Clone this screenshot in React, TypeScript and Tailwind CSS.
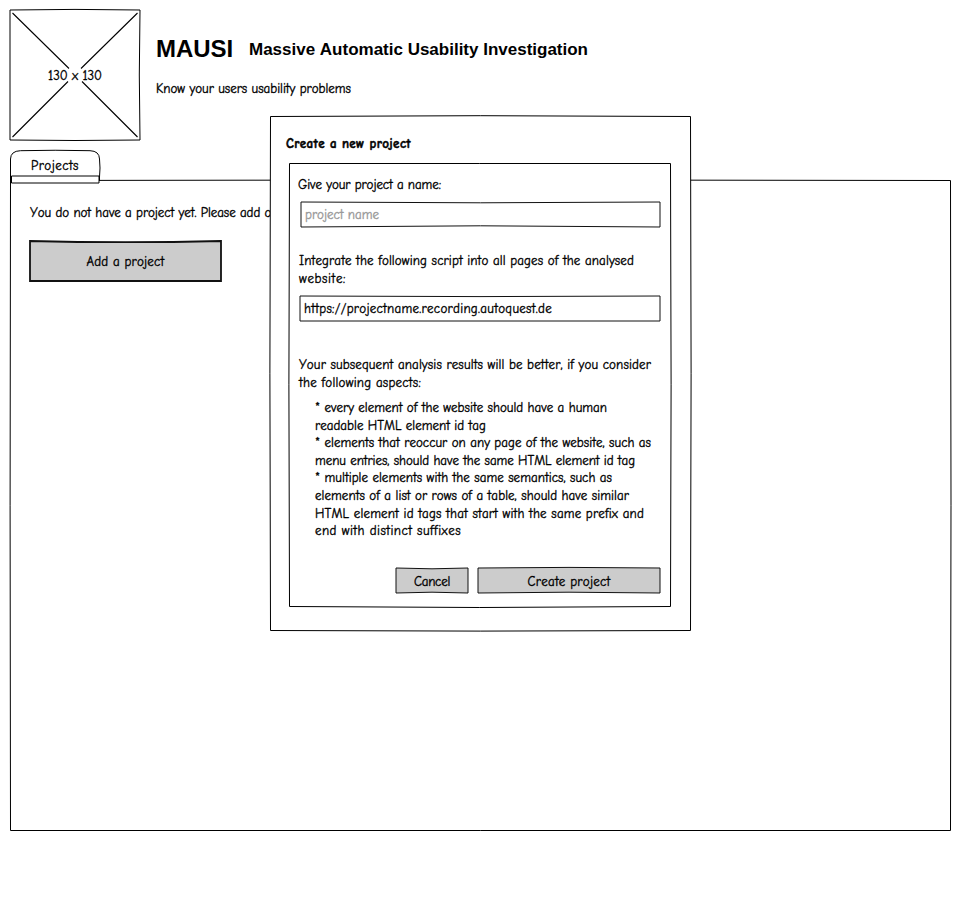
import { useLayoutEffect, useRef, useState } from "react";
import type { ReactNode } from "react";

type Bows = [number, number, number, number];

/* Hand-drawn rectangle: every side is a shallow curve, bowed outwards by the given amount. */
function Frame({
  w,
  h,
  bows = [0, 0, 0, 0],
  offset = 0,
  fill = "#fff",
  stroke = "#000",
  strokeWidth = 1,
}: {
  w: number;
  h: number;
  bows?: Bows;
  offset?: number;
  fill?: string;
  stroke?: string;
  strokeWidth?: number;
}) {
  const a = offset;
  const r = w + offset;
  const b = h + offset;
  const [t, e, s, l] = bows.map((v) => v * 2);
  const d = `M${a} ${a}Q${w / 2} ${a - t} ${r} ${a}Q${r + e} ${h / 2} ${r} ${b}Q${w / 2} ${b + s} ${a} ${b}Q${a - l} ${h / 2} ${a} ${a}Z`;
  return (
    <svg className="pointer-events-none absolute inset-0 overflow-visible" width={w} height={h} aria-hidden="true">
      <path d={d} fill={fill} stroke={stroke} strokeWidth={strokeWidth} />
    </svg>
  );
}

/* One line of text, tracked so that it spans the given width. */
function Line({ width, className = "", children }: { width: number; className?: string; children: string }) {
  const ref = useRef<HTMLSpanElement>(null);
  const [spacing, setSpacing] = useState(0);
  useLayoutEffect(() => {
    if (ref.current) {
      setSpacing((width - ref.current.getBoundingClientRect().width) / children.length);
    }
  }, [width, children]);
  return (
    <div className={`relative whitespace-nowrap ${className}`}>
      <span ref={ref} className="inline-block" style={{ letterSpacing: spacing }}>
        {children}
      </span>
    </div>
  );
}

function Button({
  className,
  frame,
  children,
}: {
  className: string;
  frame: ReactNode;
  children: ReactNode;
}) {
  return (
    <button type="button" className={`relative flex items-center justify-center ${className}`}>
      {frame}
      {children}
    </button>
  );
}

const hints: [string, number][] = [
  ["* every element of the website should have a human", 292],
  ["readable HTML element id tag", 171],
  ["* elements that reoccur on any page of the website, such as", 336],
  ["menu entries, should have the same HTML element id tag", 320],
  ["* multiple elements with the same semantics, such as", 297],
  ["elements of a list or rows of a table, should have similar", 314],
  ["HTML element id tags that start with the same prefix and", 329],
  ["end with distinct suffixes", 146],
];

function Header() {
  return (
    <header className="flex h-[150px] pl-[10px] pt-[10px]">
      <div className="relative flex h-[130px] w-[130px] shrink-0 items-center justify-center">
        <Frame w={130} h={130} bows={[0.6, -0.7, 0.5, 0]} />
        <svg className="absolute inset-0" width="130" height="130" aria-hidden="true">
          <path
            d="M2.5 3L59 58.5M71 58.5L127.500 3M2.500 127L58 71.500M72 71.500L127.500 127"
            fill="none"
            stroke="#000"
            strokeWidth="1.1"
          />
        </svg>
        <Line width={54} className="mt-[2px]">130 x 130</Line>
      </div>
      <div className="ml-4">
        <h1 className="mt-[25px] flex gap-4 font-['Liberation_Sans',Arial,sans-serif] font-bold [-webkit-text-stroke:0px]">
          <Line width={77} className="text-2xl leading-7">MAUSI</Line>
          <Line width={339} className="text-[17px] leading-[30px]">Massive Automatic Usability Investigation</Line>
        </h1>
        <Line width={195} className="mt-[15px]">Know your users usability problems</Line>
      </div>
    </header>
  );
}

function ProjectsPanel() {
  return (
    <main className="pl-[10px]">
      <div className="relative z-10 h-[30px] w-[90px] pl-[21px] pt-[7px]">
        <svg className="absolute inset-0 overflow-visible" width="90" height="30" aria-hidden="true">
          <path
            d="M.5 31V9Q.7 1 10.500 .7Q45 -.2 80 .7Q89.300 1 89.500 9Q90.500 18 89.500 27V31"
            fill="#fff"
            stroke="#000"
          />
          <path d="M1.500 26H89V33H1.500Z" fill="#fff" stroke="#000" />
        </svg>
        <Line width={48}>Projects</Line>
      </div>
      <section className="relative h-[650px] w-[940px] pl-5 pt-[24px]">
        <Frame w={940} h={650} offset={0.5} bows={[0.6, 0.5, 0, 0.4]} />
        <Line width={257}>You do not have a project yet. Please add one.</Line>
        <Button
          className="mt-[19px] h-[40px] w-[191px]"
          frame={<Frame w={191} h={40} bows={[-1.2, 0, 0, 0]} fill="#ccc" stroke="#111" strokeWidth={1.8} />}
        >
          <Line width={78} className="mt-[2px]">Add a project</Line>
        </Button>
      </section>
    </main>
  );
}

function CreateDialog() {
  return (
    <div role="dialog" className="absolute left-[270px] top-[116px] z-20 h-[514px] w-[420px] pt-[19px]">
      <Frame w={420} h={514} offset={0.5} bows={[0.8, 0.6, 0.6, 0.6]} />
      <Line width={125} className="ml-4 font-bold [-webkit-text-stroke:0.5px]">Create a new project</Line>
      <div className="relative ml-[19px] mt-[10px] flex h-[443px] w-[381px] flex-col items-start pl-[9px] pt-[13px]">
        <Frame w={381} h={443} offset={0.5} bows={[0, 0.6, 1, 0.6]} />
        <Line width={143}>Give your project a name:</Line>
        <div className="relative ml-[3px] mt-2 h-[25px] w-[359px] pl-1 pt-1">
          <Frame w={359} h={25} bows={[-0.8, 0, -1.2, 0]} stroke="#111" />
          <Line width={74} className="text-[#999]">project name</Line>
        </div>
        <Line width={335} className="ml-px mt-[25px]">Integrate the following script into all pages of the analysed</Line>
        <Line width={47} className="ml-px">website:</Line>
        <div className="relative ml-[2px] mt-2 h-[25px] w-[360px] pl-1 pt-1">
          <Frame w={360} h={25} bows={[-0.6, 0, 0, 0]} stroke="#111" />
          <Line width={248}>https://projectname.recording.autoquest.de</Line>
        </div>
        <Line width={352} className="ml-px mt-[35px]">Your subsequent analysis results will be better, if you consider</Line>
        <Line width={122} className="ml-px">the following aspects:</Line>
        <div className="ml-[17px] mt-[7px] leading-[17.6px]">
          {hints.map(([text, width]) => (
            <Line key={text} width={width}>{text}</Line>
          ))}
        </div>
        <div className="ml-[98px] mt-[28px] flex gap-[10px]">
          <Button
            className="h-[25px] w-[72px]"
            frame={<Frame w={72} h={25} bows={[-0.8, 0, -0.8, 0]} fill="#ccc" stroke="#111" />}
          >
            <Line width={36} className="mt-[3px]">Cancel</Line>
          </Button>
          <Button
            className="h-[25px] w-[182px]"
            frame={<Frame w={182} h={25} bows={[0.6, 0, -0.8, 0]} fill="#ccc" stroke="#111" />}
          >
            <Line width={83} className="mt-[3px]">Create project</Line>
          </Button>
        </div>
      </div>
    </div>
  );
}

export default function App() {
  return (
    <div className="relative h-[900px] w-[960px] overflow-hidden bg-white font-['Comic_Sans_MS','Comic_Neue',Lato,sans-serif] text-[13px] leading-[18px] text-black [font-kerning:none] [font-variant-ligatures:none] [-webkit-text-stroke:0.35px]">
      <Header />
      <ProjectsPanel />
      <CreateDialog />
    </div>
  );
}
